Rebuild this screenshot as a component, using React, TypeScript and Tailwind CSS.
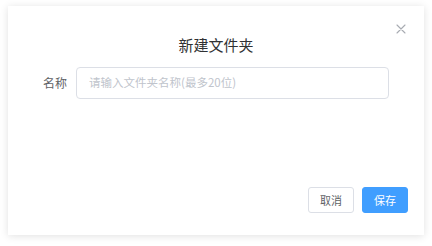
import React from "react";

export default function App() {
  return (
    <div
      className="w-[432px] h-[246px] bg-white pt-[6px] pl-[8px] pr-[8px] pb-[11px]"
      style={{ fontFamily: '"Noto Sans CJK SC", "Noto Sans", sans-serif' }}
    >
      <div className="relative h-full bg-white shadow-[0_1px_8px_rgba(0,0,0,0.12)] flex flex-col">
        <button className="absolute top-[18px] right-[18px] w-[10px] h-[10px] flex items-center justify-center">
          <svg width="10" height="10" viewBox="0 0 10 10">
            <path d="M1 1L9 9M9 1L1 9" stroke="#a8abb2" strokeWidth="1.1" strokeLinecap="round" />
          </svg>
        </button>
        <div className="pt-[29px] text-center text-[15px] leading-[20px] text-[#303133]">
          新建文件夹
        </div>
        <div className="mt-[12px] flex items-center gap-[9px]">
          <label className="w-[59px] text-right text-[12px] leading-[16px] text-[#606266]">名称</label>
          <div className="w-[313px] h-[32px] border border-[#dcdfe6] rounded-[4px] flex items-center px-[12px]">
            <input
              className="w-full outline-none bg-transparent text-[11.5px] text-[#606266] placeholder:text-[#c0c4cc]"
              placeholder="请输入文件夹名称(最多20位)"
              style={{ fontFamily: '"Noto Sans CJK SC", "Noto Sans", sans-serif' }}
            />
          </div>
        </div>
        <div className="mt-auto flex justify-end gap-[8px] pr-[16px] pb-[22px]">
          <button className="w-[46px] h-[26px] rounded-[3px] border border-[#dcdfe6] bg-white text-[11px] text-[#606266] flex items-center justify-center">
            取消
          </button>
          <button className="w-[46px] h-[26px] rounded-[3px] border border-[#409eff] bg-[#409eff] text-[11px] text-white flex items-center justify-center">
            保存
          </button>
        </div>
      </div>
    </div>
  );
}
